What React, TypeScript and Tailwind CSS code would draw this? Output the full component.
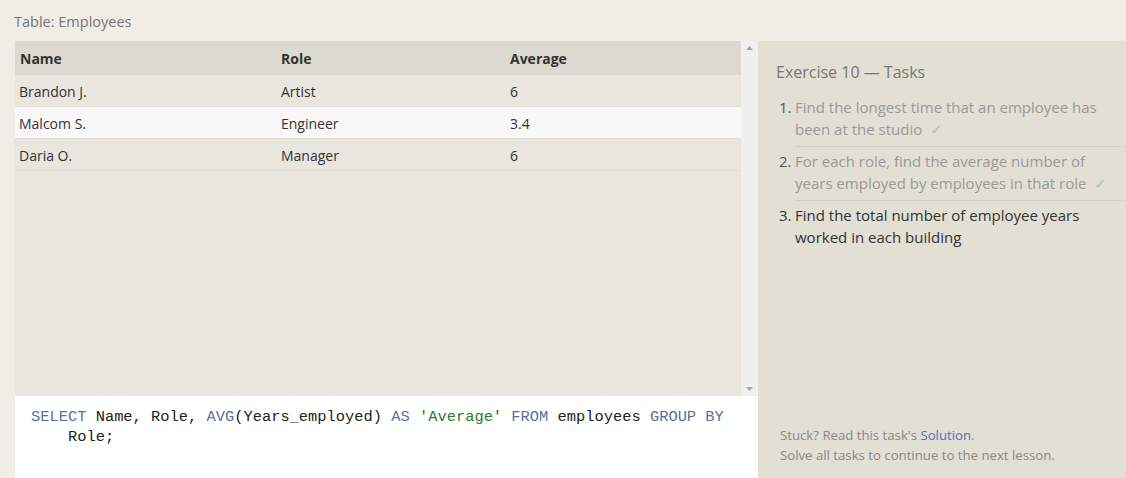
import React from 'react';

interface Row {
  name: string;
  role: string;
  average: string;
}

const rows: Row[] = [
  { name: 'Brandon J.', role: 'Artist', average: '6' },
  { name: 'Malcom S.', role: 'Engineer', average: '3.4' },
  { name: 'Daria O.', role: 'Manager', average: '6' },
];

const tasks = [
  { text: 'Find the longest time that an employee has been at the studio', done: true },
  { text: 'For each role, find the average number of years employed by employees in that role', done: true },
  { text: 'Find the total number of employee years worked in each building', done: false },
];

function Check() {
  return <span className="ml-2 inline-block text-[#a8c8a4]">✓</span>;
}

export default function App() {
  return (
    <div
      className="flex h-[478px] w-[1126px] flex-col overflow-hidden bg-[#efede6] text-[#333]"
      style={{ fontFamily: '"Open Sans", "Noto Sans", sans-serif' }}
    >
      {/* Title */}
      <div className="h-[41px] pl-[14px] pt-[12px] text-[14.5px] leading-[20px] text-[#777]">Table: Employees</div>

      <div className="flex min-h-0 flex-1">
        {/* Left: table + editor */}
        <div className="ml-[15px] flex w-[743px] flex-col">
          <div className="flex h-[355px]">
            <div className="flex-1 bg-[#e8e6de]">
              <div className="flex h-[34px] items-center bg-[#dcdad0] text-[14px] font-bold text-[#333]">
                <div className="w-[261px] pl-[5px]">Name</div>
                <div className="w-[229px] pl-[5px]">Role</div>
                <div className="flex-1 pl-[5px]">Average</div>
              </div>
              {rows.map((r, i) => (
                <div
                  key={r.name}
                  className={`flex h-[32px] items-center border-b border-[#e0ded6] pt-[2px] text-[14px] ${i === 1 ? 'bg-[#f8f8f8]' : ''}`}
                >
                  <div className="w-[261px] pl-[4px]">{r.name}</div>
                  <div className="w-[229px] pl-[5px]">{r.role}</div>
                  <div className="flex-1 pl-[5px]">{r.average}</div>
                </div>
              ))}
            </div>
            {/* Scrollbar */}
            <div className="flex w-[17px] flex-col items-center justify-between bg-[#f0f0f0] py-[5px]">
              <svg width="7" height="4" viewBox="0 0 7 4">
                <path d="M0 4 L3.5 0 L7 4 Z" fill="#a3a3a3" />
              </svg>
              <svg width="7" height="4" viewBox="0 0 7 4">
                <path d="M0 0 L3.5 4 L7 0 Z" fill="#a3a3a3" />
              </svg>
            </div>
          </div>

          {/* SQL editor */}
          <div
            className="flex-1 bg-white pl-[16px] pt-[11px] text-[15.4px] leading-[20px] text-[#222]"
            style={{ fontFamily: '"Liberation Mono", monospace' }}
          >
            <div className="whitespace-nowrap">
              <span className="text-[#5a6f9e]">SELECT</span> Name, Role, <span className="text-[#5a6f9e]">AVG</span>(Years_employed){' '}
              <span className="text-[#5a6f9e]">AS</span> <span className="text-[#2d7a2d]">'Average'</span>{' '}
              <span className="text-[#5a6f9e]">FROM</span> employees <span className="text-[#5a6f9e]">GROUP BY</span>
            </div>
            <div className="pl-[37px]">Role;</div>
          </div>
        </div>

        {/* Right: tasks */}
        <div className="flex flex-1 flex-col bg-[#e2dfd5] pl-[18px]">
          <div className="pt-[19px] text-[16px] leading-[24px] text-[#777]">Exercise 10 — Tasks</div>
          <ol className="mt-[12px] text-[15px] leading-[22px]">
            {tasks.map((t, i) => (
              <li key={i} className="flex">
                <span className={`w-[19px] shrink-0 pl-[3px] ${t.done ? 'text-[#555]' : 'text-[#333]'}`}>{i + 1}.</span>
                <div
                  className={`flex-1 pb-[6px] pr-[18px] ${i < tasks.length - 1 ? 'mb-[3px] border-b border-[#d3d0c6]' : ''} ${t.done ? 'text-[#9a9a96]' : 'text-[#333]'}`}
                >
                  {t.text}
                  {t.done && <Check />}
                </div>
              </li>
            ))}
          </ol>
          <div className="mt-auto pb-[13px] pl-[4px] text-[13.2px] leading-[20px] text-[#888]">
            <div>
              Stuck? Read this task's <span className="text-[#4a6cc4]">Solution</span>.
            </div>
            <div>Solve all tasks to continue to the next lesson.</div>
          </div>
        </div>
      </div>
    </div>
  );
}
